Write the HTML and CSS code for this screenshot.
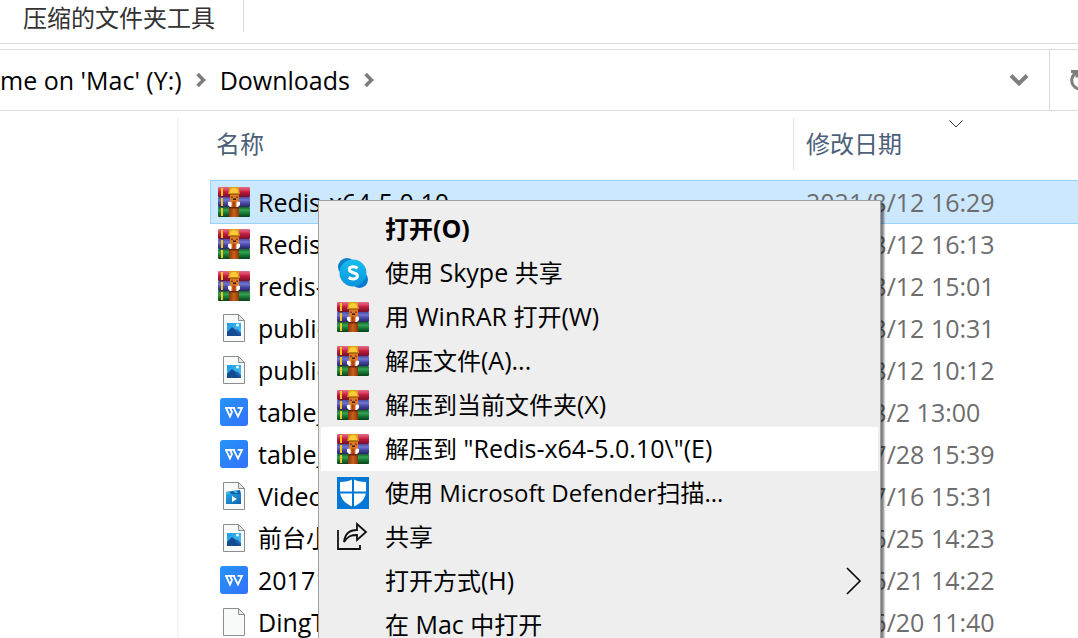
FILE: index.html
```html
<!DOCTYPE html>
<html lang="zh-CN">
<head>
<meta charset="utf-8">
<title>Downloads</title>
<link rel="stylesheet" href="styles.css">
</head>
<body>
<svg class="defs" aria-hidden="true">
  <defs>
    <linearGradient id="red" x2="0" y2="1"><stop offset="0" stop-color="#d8708a"/><stop offset=".25" stop-color="#e0486a"/><stop offset=".5" stop-color="#bf1b3e"/><stop offset="1" stop-color="#74102a"/></linearGradient>
    <linearGradient id="violet" x2="0" y2="1"><stop offset="0" stop-color="#4a4ba0"/><stop offset=".3" stop-color="#7377d2"/><stop offset=".6" stop-color="#4748a4"/><stop offset="1" stop-color="#29265f"/></linearGradient>
    <linearGradient id="green" x2="0" y2="1"><stop offset="0" stop-color="#145f2b"/><stop offset=".3" stop-color="#35a354"/><stop offset=".6" stop-color="#157b35"/><stop offset="1" stop-color="#0a3f1b"/></linearGradient>
    <linearGradient id="belt" x2="1" y2="0"><stop offset="0" stop-color="#8b350b"/><stop offset=".5" stop-color="#c9611b"/><stop offset="1" stop-color="#8b350b"/></linearGradient>
    <linearGradient id="wps" x2="1" y2="1"><stop offset="0" stop-color="#2495f8"/><stop offset="1" stop-color="#3470fb"/></linearGradient>
    <linearGradient id="sky" x2="1" y2="1"><stop offset="0" stop-color="#1e9ce8"/><stop offset="1" stop-color="#4cc4f0"/></linearGradient>
    <linearGradient id="clip" x2="1" y2="1"><stop offset="0" stop-color="#2ba8e4"/><stop offset="1" stop-color="#0b5fae"/></linearGradient>
    <linearGradient id="skype" x2="0" y2="1"><stop offset="0" stop-color="#19bdf0"/><stop offset="1" stop-color="#0794dc"/></linearGradient>
  </defs>
  <symbol id="rar" viewBox="0 0 32 30">
    <rect y="0" width="32" height="10" rx="1" fill="url(#red)"/>
    <rect y="10" width="32" height="10" rx="1" fill="url(#violet)"/>
    <rect y="20" width="32" height="10" rx="1" fill="url(#green)"/>
    <path d="M3 1h2v8H3zM3 11h2v8H3zM3 21h2v8H3z" fill="#f7c51c"/>
    <path d="M11 20h10v10H11z" fill="url(#belt)"/>
    <path d="M11 20h10v1.500H11z" fill="#6b2508"/>
    <path d="M11 0h10v3l1 4H10l1-4z" fill="#d9a01c"/>
    <path d="M12 5q0-4 4-4t4 4v1h-8z" fill="#fbc93a"/>
    <path d="M12 7h9v10l-2 3h-5l-2-3z" fill="#dd7a25"/>
    <path d="M12 6.500h9V8h-9z" fill="#a9640f"/>
    <path d="M13 9.500h2V11h-2zM18 9.500h2V11h-2z" fill="#8f3f12"/>
    <path d="M15 11.500h3V13h-3z" fill="#301a18"/>
    <path d="M10 15l2-.5 1.500 1V20H12l-2-2zM22 15l-2-.5-1.500 1V20H20l2-2z" fill="#fff"/>
    <path d="M14.500 14.500h3V20h-3z" fill="#b34112"/>
  </symbol>
  <symbol id="sheet" viewBox="0 0 22 28">
    <path d="M.5.5h15l6 6v21H.5z" fill="#f8f9f9" stroke="#8b8d90"/>
    <path d="M15.500.5v6h6z" fill="#e4e6e8" stroke="#8b8d90"/>
  </symbol>
  <symbol id="image" viewBox="0 0 22 28">
    <use href="#sheet"/>
    <path d="M4 9h14v13H4z" fill="url(#sky)"/>
    <path d="M4 18l5-5 9 7v2H4z" fill="#154b92"/>
    <path d="M12 17l2-2 4 4v3z" fill="#1b65b4"/>
    <circle cx="14.500" cy="11" r="1.600" fill="#e3f6ff"/>
  </symbol>
  <symbol id="video" viewBox="0 0 22 28">
    <use href="#sheet"/>
    <path d="M3 10l14-2 1 4H3z" fill="#0c62a8"/>
    <path d="M3 10l3-.4 2 2.400H3zM10 9l3-.4 2 2.400h-3z" fill="#3bb8ea"/>
    <path d="M3 12h15v10H3z" fill="url(#clip)"/>
    <path d="M9 14v6l5-3z" fill="#fff"/>
  </symbol>
  <symbol id="writer" viewBox="0 0 28 28">
    <rect width="28" height="28" rx="3" fill="url(#wps)"/>
    <path d="M5 9.800h10M17.500 9.800H22L18 18.500l-4-8M6 10l4 8.500 2-4.500-2-4" fill="none" stroke="#fff" stroke-width="1.800"/>
  </symbol>
  <symbol id="skype-logo" viewBox="0 0 30 30">
    <circle cx="9" cy="9" r="9" fill="#087fc8"/>
    <circle cx="21.500" cy="21.500" r="8.500" fill="#0877ce"/>
    <circle cx="15" cy="15" r="13.500" fill="url(#skype)"/>
    <path d="M19.500 10.300C17 8 11.200 8 11.200 11.600c0 4 8.200 2.300 8.200 6.200 0 3.800-6 3.900-8.900 1.700" fill="none" stroke="#fff" stroke-width="3"/>
  </symbol>
  <symbol id="shield" viewBox="0 0 32 32">
    <path d="M0 0h32v32H0z" fill="#0078d7"/>
    <path d="M16 2c3 2 8 3 13 3v9c0 8-6 13-13 16C9 27 3 22 3 14V5c5 0 10-1 13-3z" fill="#fff"/>
    <path d="M16 1v30M2 15.500h28" stroke="#0078d7" stroke-width="2"/>
  </symbol>
  <symbol id="share" viewBox="0 0 32 30">
    <path d="M1 8v19h22v-4M7 20C8 11 13 8 20 8V2l9 8-9 8v-5c-6 0-9 1-13 7z" fill="none" stroke="#111" stroke-width="1.800"/>
  </symbol>
  <symbol id="crumb" viewBox="0 0 10 16"><path d="M1.500 2l6 6-6 6" fill="none" stroke="#7e7e7e" stroke-width="3.600"/></symbol>
</svg>

<header class="ribbon"><button class="tab">压缩的文件夹工具</button></header>

<nav class="address" aria-label="地址栏">
  <div class="crumbs">
    <a href="#drive">me on 'Mac' (Y:)</a>
    <svg class="crumb"><use href="#crumb"/></svg>
    <a href="#downloads">Downloads</a>
    <svg class="crumb"><use href="#crumb"/></svg>
  </div>
  <button class="history" aria-label="以前的位置"><svg width="20" height="14" viewBox="0 0 20 14"><path d="M2 2.500l8 8 8-8" fill="none" stroke="#7e7e7e" stroke-width="4"/></svg></button>
  <button class="refresh" aria-label="刷新"><svg width="24" height="24" viewBox="0 0 24 24"><path d="M1 3.500h6v6M7 4C1 7 1 14 3 17c4 6 13 5 16-1 2-5 0-10-4-12" fill="none" stroke="#7e7e7e" stroke-width="3"/></svg></button>
</nav>

<div class="explorer">
  <aside class="sidebar"></aside>
  <main class="content">
    <table class="files">
      <colgroup><col class="col-name"><col></colgroup>
      <thead><tr>
        <th><button class="sort">名称</button></th>
        <th><button class="sort">修改日期</button><svg class="sort-mark" width="14" height="8" viewBox="0 0 14 8"><path d="M.5.5L7 7 13.500.5" fill="none" stroke="#333"/></svg></th>
      </tr></thead>
      <tbody>
        <tr class="selected"><td><div class="file"><svg class="rar"><use href="#rar"/></svg>Redis-x64-5.0.10</div></td><td>2021/8/12 16:29</td></tr>
        <tr><td><div class="file"><svg class="rar"><use href="#rar"/></svg>Redis</div></td><td>2021/8/12 16:13</td></tr>
        <tr><td><div class="file"><svg class="rar"><use href="#rar"/></svg>redis-</div></td><td>2021/8/12 15:01</td></tr>
        <tr><td><div class="file"><svg class="doc"><use href="#image"/></svg>public</div></td><td>2021/8/12 10:31</td></tr>
        <tr><td><div class="file"><svg class="doc"><use href="#image"/></svg>public</div></td><td>2021/8/12 10:12</td></tr>
        <tr><td><div class="file"><svg class="wps"><use href="#writer"/></svg>table_</div></td><td>2021/8/2 13:00</td></tr>
        <tr><td><div class="file"><svg class="wps"><use href="#writer"/></svg>table_</div></td><td>2021/7/28 15:39</td></tr>
        <tr><td><div class="file"><svg class="doc"><use href="#video"/></svg>Video</div></td><td>2021/7/16 15:31</td></tr>
        <tr><td><div class="file"><svg class="doc"><use href="#image"/></svg><span class="cjk">前台小</span></div></td><td>2021/6/25 14:23</td></tr>
        <tr><td><div class="file"><svg class="wps"><use href="#writer"/></svg>20171</div></td><td>2021/6/21 14:22</td></tr>
        <tr><td><div class="file"><svg class="doc"><use href="#sheet"/></svg>DingT</div></td><td>2021/6/20 11:40</td></tr>
      </tbody>
    </table>
  </main>
</div>

<div class="menu" role="menu">
  <button class="item default" role="menuitem"><span class="icon"></span><span>打开<span class="latin">(O)</span></span></button>
  <button class="item" role="menuitem"><span class="icon"><svg class="skype"><use href="#skype-logo"/></svg></span><span>使用<span class="latin"> Skype </span>共享</span></button>
  <button class="item" role="menuitem"><span class="icon"><svg class="rar"><use href="#rar"/></svg></span><span>用<span class="latin"> WinRAR </span>打开<span class="latin">(W)</span></span></button>
  <button class="item" role="menuitem"><span class="icon"><svg class="rar"><use href="#rar"/></svg></span><span>解压文件<span class="latin">(A)...</span></span></button>
  <button class="item" role="menuitem"><span class="icon"><svg class="rar"><use href="#rar"/></svg></span><span>解压到当前文件夹<span class="latin">(X)</span></span></button>
  <button class="item active" role="menuitem"><span class="icon"><svg class="rar"><use href="#rar"/></svg></span><span>解压到<span class="latin"> "Redis-x64-5.0.10\"(E)</span></span></button>
  <button class="item" role="menuitem"><span class="icon"><svg class="defender"><use href="#shield"/></svg></span><span>使用 Microsoft Defender扫描...</span></button>
  <button class="item" role="menuitem"><span class="icon"><svg class="rar"><use href="#share"/></svg></span><span>共享</span></button>
  <button class="item" role="menuitem"><span class="icon"></span><span>打开方式<span class="latin">(H)</span></span><svg class="submenu" width="16" height="28" viewBox="0 0 16 28"><path d="M1 1l13 13L1 27" fill="none" stroke="#000" stroke-width="1.600"/></svg></button>
  <button class="item" role="menuitem"><span class="icon"></span><span>在<span class="latin"> Mac </span>中打开</span></button>
</div>
</body>
</html>
```
FILE: styles.css
```css
* { box-sizing: border-box; }

body {
  margin: 0;
  height: 100vh;
  overflow: hidden;
  background: #fff;
  color: #000;
  font: 24px/32px "Open Sans", "Noto Sans CJK SC", sans-serif;
  white-space: nowrap;
}

button {
  padding: 0;
  border: 0;
  background: none;
  color: inherit;
  font: inherit;
  text-align: left;
}

a { color: inherit; text-decoration: none; }
svg { display: block; flex: none; }
.defs { position: absolute; width: 0; height: 0; }
.latin { font-size: 25px; line-height: 24px; }
.cjk { font-size: 24px; }

.ribbon {
  height: 44px;
  border-bottom: 1px solid #d9d9d9;
}
.tab {
  height: 32px;
  padding: 0 28px 0 23px;
  border-right: 1px solid #dadada;
  color: #333;
  line-height: 36px;
}

.address {
  display: flex;
  height: 62px;
  margin-top: 5px;
  border: solid #d9d9d9;
  border-width: 1px 0;
}
.crumbs { display: flex; flex: 1; align-items: center; gap: 14px; font-size: 25px; }
.crumb { width: 10px; height: 16px; }
.history {
  display: flex;
  align-items: center;
  padding: 0 20px;
  border-right: 1px solid #d9d9d9;
}
.refresh {
  display: flex;
  align-items: center;
  width: 28px;
  padding-left: 20px;
  overflow: hidden;
}

.explorer { display: flex; }
.sidebar {
  width: 179px;
  height: 520px;
  margin-top: 7px;
  border-right: 2px solid #f5f5f5;
}
.content { flex: 1; padding-left: 32px; }

.files {
  width: 100%;
  table-layout: fixed;
  border-collapse: collapse;
}
.col-name { width: 583px; }
.files th {
  position: relative;
  height: 70px;
  padding: 7px 0 11px;
  color: #4c607a;
  font-weight: 400;
  text-align: left;
}
.sort {
  width: 100%;
  height: 52px;
  padding-left: 5px;
  border-right: 1px solid #e3e3e3;
}
th + th .sort { padding-left: 12px; border: 0; }
.sort-mark { position: absolute; top: 9px; left: 155px; }
.files td { height: 42px; padding: 0; font-size: 25px; }
.files td + td { padding-left: 12px; color: #6d6d6d; }
.selected { background: #cce8ff; outline: 1px solid #99d1ff; }
.file { display: flex; align-items: center; gap: 8px; padding-left: 7px; }

.rar { width: 32px; height: 30px; }
.doc { width: 22px; height: 28px; margin: 0 5px; }
.wps { width: 28px; height: 28px; margin: 0 2px; }
.skype { width: 30px; height: 30px; }
.defender { width: 32px; height: 32px; }

.menu {
  position: absolute;
  top: 200px;
  left: 318px;
  width: 563px;
  padding: 6px 2px;
  border: 1px solid #a0a0a0;
  background: #eee;
  box-shadow: 3px 3px 2px rgba(0, 0, 0, .5);
}
.item {
  display: flex;
  align-items: center;
  width: 100%;
  height: 44px;
  padding: 0 16px;
}
.icon { display: flex; justify-content: center; width: 32px; margin-right: 16px; }
.default { font-weight: 700; }
.active { background: #fff; }
.submenu { margin-left: auto; }
```
